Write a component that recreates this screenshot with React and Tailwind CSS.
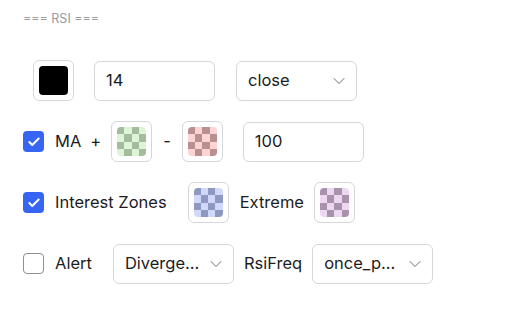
import React from 'react';
import { ChevronDown, Check } from 'lucide-react';

const palettes = {
  green: ['#a2bc9c', '#ddf5d6'],
  red: ['#b98f90', '#fdd3d3'],
  blue: ['#8e99c1', '#d1d9fb'],
  purple: ['#a992ae', '#ecd8f1'],
};

const Swatch = ({ tone, solid, className = '' }) => {
  const [dark, light] = palettes[tone] || [];
  return (
    <div className={`h-[41px] w-[41px] shrink-0 rounded-[6px] border border-[#d6d6dc] bg-white flex items-center justify-center ${className}`}>
      {solid ? (
        <div className="h-[29px] w-[29px] rounded-[4px] bg-black" />
      ) : (
        <div className="h-[29px] w-[29px] rounded-[4px] overflow-hidden grid grid-cols-4 grid-rows-4">
          {Array.from({ length: 16 }).map((_, i) => {
            const r = Math.floor(i / 4);
            const c = i % 4;
            return <div key={i} style={{ background: (r + c) % 2 === 0 ? dark : light }} />;
          })}
        </div>
      )}
    </div>
  );
};

const TextInput = ({ value, className = '' }) => (
  <div className={`h-[40px] w-[121px] shrink-0 rounded-[6px] border border-[#d6d6dc] bg-white px-[11px] flex items-center text-[16.5px] text-[#1c1c1e] ${className}`}>
    {value}
  </div>
);

const Select = ({ value, className = '' }) => (
  <div className={`h-[40px] w-[121px] shrink-0 rounded-[6px] border border-[#d6d6dc] bg-white pl-[11px] pr-[7px] flex items-center justify-between text-[16.5px] text-[#1c1c1e] ${className}`}>
    <span>{value}</span>
    <ChevronDown size={20} strokeWidth={1.1} className="text-[#5f5f66]" />
  </div>
);

const Toggle = ({ checked }) =>
  checked ? (
    <div className="h-[21px] w-[21px] shrink-0 rounded-[4px] bg-[#3565f2] flex items-center justify-center">
      <Check size={14} strokeWidth={3.5} className="text-white" />
    </div>
  ) : (
    <div className="h-[21px] w-[21px] shrink-0 rounded-[4px] border border-[#8e8e96] bg-white" />
  );

export default function App() {
  return (
    <div
      className="w-[512px] h-[329px] bg-white pl-[23px] pt-[11px] text-[#1c1c1e]"
      style={{ fontFamily: 'Inter, "Noto Sans", sans-serif' }}
    >
      <div className="text-[12.5px] leading-[16px] text-[#9a9aa0]">=== RSI ===</div>

      <div className="mt-[33px] flex flex-col gap-[20px]">
        <div className="flex items-center h-[41px] pl-[10px]">
          <Swatch solid />
          <TextInput value="14" className="ml-[20px]" />
          <Select value="close" className="ml-[21px]" />
        </div>

        <div className="flex items-center h-[41px] text-[16.5px]">
          <Toggle checked />
          <span className="ml-[11px]">MA</span>
          <span className="ml-[9px]">+</span>
          <Swatch tone="green" className="ml-[10px]" />
          <span className="ml-[11px]">-</span>
          <Swatch tone="red" className="ml-[11px]" />
          <TextInput value="100" className="ml-[20px]" />
        </div>

        <div className="flex items-center h-[41px] text-[16.5px]">
          <Toggle checked />
          <span className="ml-[11px]">Interest Zones</span>
          <Swatch tone="blue" className="ml-[21px]" />
          <span className="ml-[11px]">Extreme</span>
          <Swatch tone="purple" className="ml-[10px]" />
        </div>

        <div className="flex items-center h-[41px] text-[16.5px]">
          <Toggle />
          <span className="ml-[11px]">Alert</span>
          <Select value="Diverge..." className="ml-[21px]" />
          <span className="ml-[10px]">RsiFreq</span>
          <Select value="once_p..." className="ml-[10px] w-[119px]" />
        </div>
      </div>
    </div>
  );
}
